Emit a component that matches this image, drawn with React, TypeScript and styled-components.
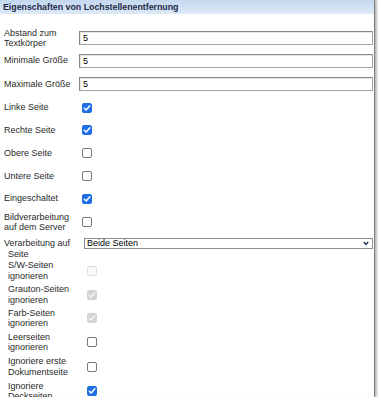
import React from 'react';
import styled, { createGlobalStyle } from 'styled-components';

const Global = createGlobalStyle`
  html, body { margin: 0; padding: 0; background: #ffffff; }
  body { font-family: "Liberation Sans", Arial, sans-serif; }
`;

const Panel = styled.div`
  position: relative;
  width: 374px;
  height: 397px;
  border-right: 1px solid #7e7e7e;
  box-shadow: 2px 0 2px rgba(0, 0, 0, 0.28);
  background: #ffffff;
  &::after {
    content: '';
    position: absolute;
    left: 13px;
    right: -3px;
    bottom: -1px;
    height: 1px;
    background: #7e7e7e;
    box-shadow: 0 1px 2px rgba(0, 0, 0, 0.35);
  }
`;

const Header = styled.div`
  height: 14px;
  line-height: 14px;
  padding-left: 3px;
  background: linear-gradient(to bottom, #c4d7ee, #dde9f7);
  color: #1b2a48;
  font-weight: bold;
  font-size: 8.8px;
  white-space: nowrap;
`;

const Body = styled.div`
  position: relative;
  z-index: 1;
  padding-top: 13px;
`;

const Row = styled.div<{ $h: number; $top?: boolean }>`
  display: flex;
  align-items: ${(p) => (p.$top ? 'flex-start' : 'center')};
  height: ${(p) => p.$h}px;
  padding-left: 4px;
  padding-top: ${(p) => (p.$top ? '3.5px' : '0')};
  box-sizing: border-box;
`;

const Label = styled.div<{ $sub?: boolean; $indent?: boolean }>`
  width: 75px;
  flex: none;
  box-sizing: border-box;
  padding-left: ${(p) => (p.$sub || p.$indent ? '4px' : '0')};
  text-indent: ${(p) => (p.$indent ? '-4px' : '0')};
  font-size: 9px;
  line-height: 10.5px;
  color: #2a2a2a;
`;

const TextInput = styled.div`
  width: 294px;
  height: 14px;
  box-sizing: border-box;
  border: 1px solid #a3a3a3;
  border-top-color: #888888;
  border-left-color: #888888;
  box-shadow: inset 1px 1px 0 #e6e6e6;
  padding-left: 3px;
  font-size: 9px;
  line-height: 12px;
  color: #000;
`;

const Select = styled.div`
  position: relative;
  margin-left: 5px;
  width: 289px;
  height: 11px;
  box-sizing: border-box;
  border: 1px solid #8c8c8c;
  padding-left: 2px;
  font-size: 9px;
  line-height: 9px;
  color: #000;
`;

const Chevron = styled.svg`
  position: absolute;
  right: 3px;
  top: 2px;
`;

const Box = styled.span<{ $on: boolean; $disabled?: boolean; $sub?: boolean }>`
  display: inline-flex;
  align-items: center;
  justify-content: center;
  flex: none;
  margin-left: ${(p) => (p.$sub ? '8px' : '3px')};
  width: 10px;
  height: 10px;
  box-sizing: border-box;
  border-radius: 2px;
  border: 1px solid
    ${(p) => (p.$disabled ? (p.$on ? '#d4d4d4' : '#dedede') : p.$on ? '#1f6fe5' : '#7a7a7a')};
  background: ${(p) => (p.$disabled ? (p.$on ? '#d4d4d4' : '#fafafa') : p.$on ? '#1f6fe5' : '#ffffff')};
`;

const Checkbox = ({ on, disabled, sub }: { on: boolean; disabled?: boolean; sub?: boolean }) => (
  <Box $on={on} $disabled={disabled} $sub={sub}>
    {on && (
      <svg width="8" height="8" viewBox="0 0 8 8">
        <path
          d="M1.3 4.2 L3.2 6 L6.8 1.8"
          fill="none"
          stroke={disabled ? '#f4f4f4' : '#ffffff'}
          strokeWidth="1.5"
          strokeLinecap="round"
          strokeLinejoin="round"
        />
      </svg>
    )}
  </Box>
);

type RowDef =
  | { kind: 'input'; label: string; h: number; value: string }
  | { kind: 'check'; label: string; h: number; on: boolean; disabled?: boolean; sub?: boolean }
  | { kind: 'select'; label: string; h: number; value: string };

const rows: RowDef[] = [
  { kind: 'input', label: 'Abstand zum Textkörper', h: 22, value: '5' },
  { kind: 'input', label: 'Minimale Größe', h: 23, value: '5' },
  { kind: 'input', label: 'Maximale Größe', h: 24, value: '5' },
  { kind: 'check', label: 'Linke Seite', h: 23, on: true },
  { kind: 'check', label: 'Rechte Seite', h: 22.5, on: true },
  { kind: 'check', label: 'Obere Seite', h: 23, on: false },
  { kind: 'check', label: 'Untere Seite', h: 22.5, on: false },
  { kind: 'check', label: 'Eingeschaltet', h: 23, on: true },
  { kind: 'check', label: 'Bildverarbeitung auf dem Server', h: 24.5, on: false },
  { kind: 'select', label: 'Verarbeitung auf Seite', h: 24, value: 'Beide Seiten' },
  { kind: 'check', label: 'S/W-Seiten ignorieren', h: 24, on: false, disabled: true, sub: true },
  { kind: 'check', label: 'Grauton-Seiten ignorieren', h: 24, on: true, disabled: true, sub: true },
  { kind: 'check', label: 'Farb-Seiten ignorieren', h: 23.5, on: true, disabled: true, sub: true },
  { kind: 'check', label: 'Leerseiten ignorieren', h: 24.5, on: false, sub: true },
  { kind: 'check', label: 'Ignoriere erste Dokumentseite', h: 24.5, on: false, sub: true },
  { kind: 'check', label: 'Ignoriere Deckseiten', h: 24, on: true, sub: true },
];

export default function App() {
  return (
    <>
      <Global />
      <Panel>
        <Header>Eigenschaften von Lochstellenentfernung</Header>
        <Body>
          {rows.map((r) => {
            if (r.kind === 'input') {
              return (
                <Row key={r.label} $h={r.h}>
                  <Label>{r.label}</Label>
                  <TextInput>{r.value}</TextInput>
                </Row>
              );
            }
            if (r.kind === 'select') {
              return (
                <Row key={r.label} $h={r.h} $top>
                  <Label $indent>{r.label}</Label>
                  <Select>
                    {r.value}
                    <Chevron width="6" height="5" viewBox="0 0 6 5">
                      <path d="M0.8 1 L3 3.4 L5.2 1" fill="none" stroke="#1d3160" strokeWidth="1.4" />
                    </Chevron>
                  </Select>
                </Row>
              );
            }
            return (
              <Row key={r.label} $h={r.h}>
                <Label $sub={r.sub}>{r.label}</Label>
                <Checkbox on={r.on} disabled={r.disabled} sub={r.sub} />
              </Row>
            );
          })}
        </Body>
      </Panel>
    </>
  );
}
